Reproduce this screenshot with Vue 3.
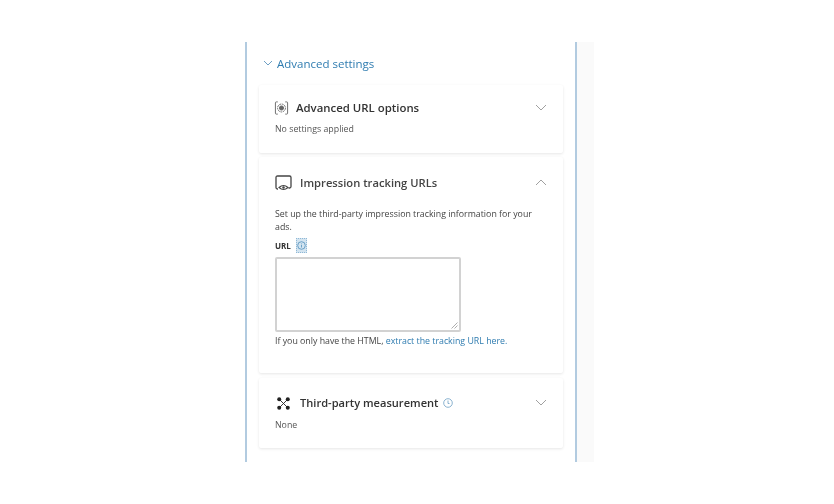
<script setup>
const helpText = 'Set up the third-party impression tracking information for your ads.'
</script>

<template>
  <div class="page">
    <main class="panel">
      <div class="section-head">
        <svg class="head-chev" width="10" height="6" viewBox="0 0 10 6"><path d="M1 1l4 4 4-4" fill="none" stroke="#6d9fc4" stroke-width="1"/></svg>
        <span>Advanced settings</span>
      </div>

      <section class="card card-url">
        <div class="card-head">
          <svg class="icon url-icon" width="15" height="16" viewBox="0 0 16 16" fill="none" stroke="#666">
            <path d="M4 1.500H2.500Q1.500 1.500 1.500 2.500V13.500Q1.500 14.500 2.500 14.500H4M12 1.500H13.500Q14.500 1.500 14.500 2.500V13.500Q14.500 14.500 13.500 14.500H12" />
            <circle cx="8" cy="8" r="4.200" stroke-dasharray="2 .8" />
            <circle cx="8" cy="8" r="2.200" fill="#666" />
          </svg>
          <h2>Advanced URL options</h2>
          <svg class="chev" width="12" height="7" viewBox="0 0 12 7"><path d="M1 1l5 5 5-5" fill="none" stroke="#a0a0a0"/></svg>
        </div>
        <p class="meta">No settings applied</p>
      </section>

      <section class="card card-imp">
        <div class="card-head">
          <svg class="icon" width="17" height="16" viewBox="0 0 17 16" fill="none" stroke="#444" stroke-width="1.300">
            <path d="M1 11V2.500Q1 1 2.500 1H14.500Q16 1 16 2.500V11.500Q16 13 14.500 13H13.500M1 11v1.500Q1 14 2.500 14H3" />
            <path d="M4 12.500Q8.500 8.500 13 12.500Q8.500 16.500 4 12.500Z" fill="#fff" stroke-width="1.100" />
            <circle cx="8.500" cy="12.500" r="1.200" fill="#444" stroke="none" />
          </svg>
          <h2 class="light">Impression tracking URLs</h2>
          <svg class="chev" width="12" height="7" viewBox="0 0 12 7"><path d="M1 6l5-5 5 5" fill="none" stroke="#a0a0a0"/></svg>
        </div>
        <p class="help">{{ helpText }}</p>
        <div class="url-label">
          <strong>URL</strong>
          <span class="info-box">
            <svg width="9" height="9" viewBox="0 0 9 9" fill="none" stroke="#4f8fbd" stroke-width=".8"><circle cx="4.500" cy="4.500" r="3.800"/><path d="M4.500 4v2.500M4.500 2.500v.8"/></svg>
          </span>
        </div>
        <div class="textarea">
          <svg class="grip" width="7" height="7" viewBox="0 0 7 7"><path d="M6.500 .5l-6 6M6.500 3.500l-3 3" stroke="#999" stroke-width=".8"/></svg>
        </div>
        <p class="hint">If you only have the HTML, <a href="#">extract the tracking URL here.</a></p>
      </section>

      <section class="card card-third">
        <div class="card-head">
          <svg class="icon third-icon" width="13" height="13" viewBox="0 0 13 13" fill="#222" stroke="#222" stroke-width=".9">
            <path d="M3 3l7 7M10 3l-7 7" />
            <circle cx="2.200" cy="2.200" r="2" stroke="none"/>
            <circle cx="10.800" cy="2.200" r="2" stroke="none"/>
            <circle cx="2.200" cy="10.800" r="2" stroke="none"/>
            <circle cx="10.800" cy="10.800" r="2" stroke="none"/>
          </svg>
          <h2 class="third-title">Third-party measurement</h2>
          <svg class="q" width="10" height="10" viewBox="0 0 10 10" fill="none" stroke="#6d9fc4" stroke-width=".8"><circle cx="5" cy="5" r="4.300"/><path d="M5 2.500V5.500H6.500" /></svg>
          <svg class="chev" width="12" height="7" viewBox="0 0 12 7"><path d="M1 1l5 5 5-5" fill="none" stroke="#a0a0a0"/></svg>
        </div>
        <p class="meta">None</p>
      </section>
    </main>
    <aside class="side"></aside>
  </div>
</template>

<style scoped>
.page {
  display: flex;
  width: 834px;
  height: 504px;
  box-sizing: border-box;
  padding: 42px 0 42px 245px;
  background: #fff;
  font-family: "Open Sans", "Noto Sans", sans-serif;
  color: #3a3a3a;
  filter: blur(0.6px);
}
.panel {
  width: 332px;
  box-sizing: border-box;
  border-left: 2px solid #b2cbe0;
  border-right: 2px solid #b2cbe0;
  padding: 0 12px;
  background: #fff;
}
.side {
  width: 17px;
  background: #fafafa;
}
.section-head {
  height: 43px;
  display: flex;
  align-items: center;
  gap: 4px;
  padding: 0 0 1px 4px;
  box-sizing: border-box;
  font-size: 11.500px;
  color: #2f7cb0;
}
.card {
  background: #fff;
  box-shadow: 0 1px 3px rgba(0, 0, 0, 0.1);
  border-radius: 2px;
  padding: 0 16px 0 16px;
  box-sizing: border-box;
}
.card-url { height: 68px; padding-top: 14px; }
.card-imp { height: 216px; margin-top: 4px; padding-top: 17px; }
.card-third { height: 70px; margin-top: 5px; padding-top: 16px; }
.card-head {
  display: flex;
  align-items: center;
  height: 18px;
}
.icon { flex: none; margin-right: 8px; }
.url-icon { margin: 0 7px 0 -1px; }
.third-icon { margin: 0 10px 0 2px; }
.card-head h2 {
  margin: 0;
  font-size: 11.400px;
  font-weight: 600;
  color: #333;
  line-height: 18px;
}
.card-head h2.light { font-size: 11.200px; color: #444; }
.card-head h2.third-title { font-size: 11.100px; }
.q { margin-left: 5px; }
.chev { margin-left: auto; margin-bottom: 2px; flex: none; }
.meta {
  margin: 6px 0 0;
  font-size: 8.800px;
  line-height: 13px;
  color: #555;
}
.card-third .meta { margin-top: 7px; }
.help {
  margin: 16px 0 0;
  width: 262px;
  font-size: 8.800px;
  line-height: 13px;
  color: #444;
}
.url-label {
  display: flex;
  align-items: center;
  gap: 5px;
  height: 15px;
  margin-top: 4px;
  font-size: 8px;
  color: #333;
}
.url-label strong { font-weight: 700; }
.info-box {
  display: flex;
  align-items: center;
  justify-content: center;
  width: 11px;
  height: 15px;
  background: #d3e4f0;
  border: 1px dotted #8fb8d6;
  box-sizing: border-box;
}
.textarea {
  position: relative;
  width: 186px;
  height: 75px;
  margin-top: 4px;
  box-sizing: border-box;
  border: 2px solid #d2d2d2;
  border-radius: 2px;
  background: #fff;
}
.grip { position: absolute; right: 1px; bottom: 1px; }
.hint {
  margin: 3px 0 0;
  font-size: 8.800px;
  line-height: 13px;
  color: #444;
}
.hint a { color: #2f7cb0; text-decoration: none; }
</style>
